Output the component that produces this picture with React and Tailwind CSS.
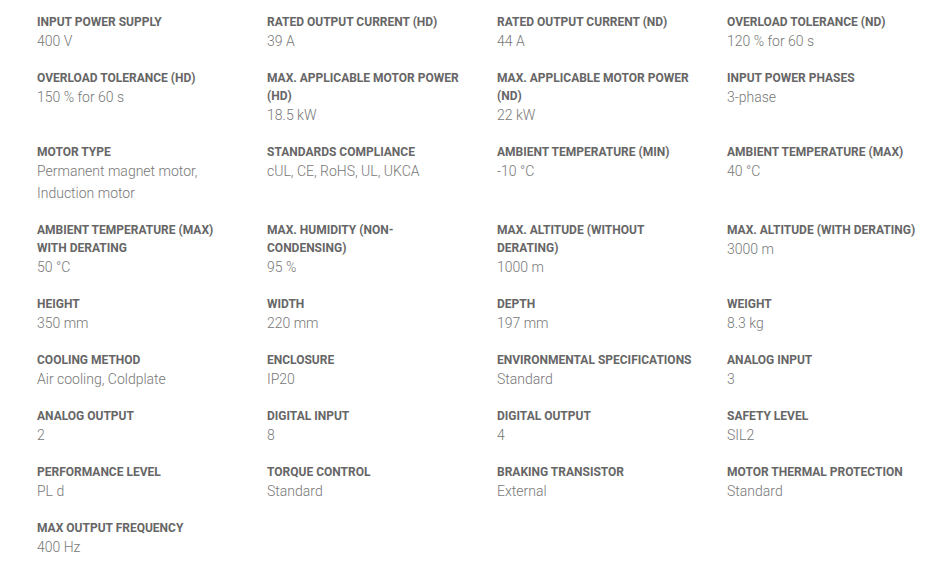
import React from 'react';

const specs = [
  ['Input power supply', '400 V'],
  ['Rated output current (HD)', '39 A'],
  ['Rated output current (ND)', '44 A'],
  ['Overload tolerance (ND)', '120 % for 60 s'],
  ['Overload tolerance (HD)', '150 % for 60 s'],
  ['Max. applicable motor power (HD)', '18.5 kW'],
  ['Max. applicable motor power (ND)', '22 kW'],
  ['Input power phases', '3-phase'],
  ['Motor type', 'Permanent magnet motor, Induction motor'],
  ['Standards compliance', 'cUL, CE, RoHS, UL, UKCA'],
  ['Ambient temperature (min)', '-10 °C'],
  ['Ambient temperature (max)', '40 °C'],
  ['Ambient temperature (max) with derating', '50 °C'],
  ['Max. humidity (non-condensing)', '95 %'],
  ['Max. altitude (without derating)', '1000 m'],
  ['Max. altitude (with derating)', '3000 m'],
  ['Height', '350 mm'],
  ['Width', '220 mm'],
  ['Depth', '197 mm'],
  ['Weight', '8.3 kg'],
  ['Cooling method', 'Air cooling, Coldplate'],
  ['Enclosure', 'IP20'],
  ['Environmental specifications', 'Standard'],
  ['Analog input', '3'],
  ['Analog output', '2'],
  ['Digital input', '8'],
  ['Digital output', '4'],
  ['Safety level', 'SIL2'],
  ['Performance level', 'PL d'],
  ['Torque control', 'Standard'],
  ['Braking transistor', 'External'],
  ['Motor thermal protection', 'Standard'],
  ['Max output frequency', '400 Hz'],
];

export default function App() {
  return (
    <div className="w-[945px] h-[580px] bg-white font-['Roboto',sans-serif]">
      <div className="grid grid-cols-[repeat(4,200px)] gap-x-[30px] gap-y-[17px] pl-[37px] pt-[13px]">
        {specs.map(([label, value]) => (
          <div key={label}>
            <div className="text-[12px] leading-[18px] font-bold uppercase text-[#666]">{label}</div>
            <div className="-mt-px text-[14px] leading-[22px] font-light text-[#777]">{value}</div>
          </div>
        ))}
      </div>
    </div>
  );
}
